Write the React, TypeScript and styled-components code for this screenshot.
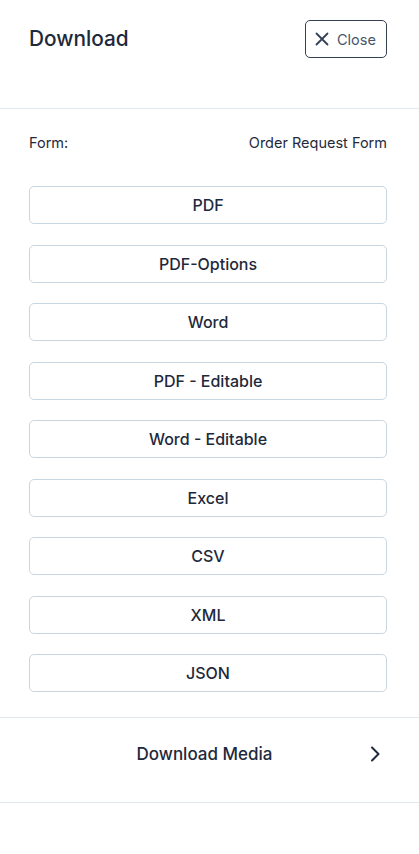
import React from "react";
import styled, { createGlobalStyle } from "styled-components";

const Global = createGlobalStyle`
  html, body { margin: 0; padding: 0; background: #ffffff; }
  body { font-family: Inter, "Open Sans", "Liberation Sans", sans-serif; color: #1e293b; }
  * { box-sizing: border-box; }
`;

const Panel = styled.div`
  width: 419px;
  min-height: 854px;
  background: #fff;
  display: flex;
  flex-direction: column;
`;

const Header = styled.header`
  display: flex;
  justify-content: space-between;
  align-items: flex-start;
  padding: 20px 32px 0 29px;
  height: 109px;
  border-bottom: 1px solid #e2e8f0;
`;

const Title = styled.h1`
  margin: 0;
  margin-top: 7px;
  font-size: 20.8px;
  line-height: 24px;
  font-weight: 500;
  color: #1e293b;
`;

const CloseButton = styled.button`
  display: flex;
  align-items: center;
  gap: 7px;
  height: 38px;
  width: 82px;
  padding: 0 0 0 8px;
  background: #fff;
  border: 1px solid #334155;
  border-radius: 5px;
  font-family: inherit;
  font-size: 14.5px;
  color: #475569;
  cursor: pointer;
`;

const Body = styled.div`
  display: flex;
  flex-direction: column;
  padding: 25px 32px 25px 29px;
  border-bottom: 1px solid #e2e8f0;
`;

const FormRow = styled.div`
  display: flex;
  justify-content: space-between;
  font-size: 14.5px;
  line-height: 18px;
  color: #1e293b;
  margin-bottom: 34px;
`;

const ButtonList = styled.div`
  display: flex;
  flex-direction: column;
  gap: 20.5px;
`;

const FormatButton = styled.button`
  height: 38px;
  width: 100%;
  background: #fff;
  border: 1px solid #c8d6e1;
  border-radius: 5px;
  font-family: inherit;
  font-size: 16px;
  font-weight: 500;
  color: #1e293b;
  cursor: pointer;
`;

const MediaRow = styled.div`
  height: 85px;
  display: flex;
  align-items: center;
  justify-content: center;
  position: relative;
  padding: 0 10px 12px 0;
  border-bottom: 1px solid #e2e8f0;
  font-size: 17px;
  font-weight: 500;
  color: #1e293b;
`;

const Chevron = styled.span`
  position: absolute;
  right: 39px;
  top: 28px;
  display: flex;
`;

const formats = [
  "PDF",
  "PDF-Options",
  "Word",
  "PDF - Editable",
  "Word - Editable",
  "Excel",
  "CSV",
  "XML",
  "JSON",
];

export default function App() {
  return (
    <Panel>
      <Global />
      <Header>
        <Title>Download</Title>
        <CloseButton>
          <svg width="16" height="16" viewBox="0 0 16 16" fill="none">
            <path d="M2.5 2.5L13.5 13.5M13.5 2.5L2.5 13.5" stroke="#334155" strokeWidth="1.8" strokeLinecap="round" />
          </svg>
          Close
        </CloseButton>
      </Header>
      <Body>
        <FormRow>
          <span>Form:</span>
          <span>Order Request Form</span>
        </FormRow>
        <ButtonList>
          {formats.map((f) => (
            <FormatButton key={f}>{f}</FormatButton>
          ))}
        </ButtonList>
      </Body>
      <MediaRow>
        Download Media
        <Chevron>
          <svg width="10" height="16" viewBox="0 0 10 16" fill="none">
            <path d="M2 1.5L8.5 8L2 14.5" stroke="#1e293b" strokeWidth="2" strokeLinecap="round" strokeLinejoin="round" />
          </svg>
        </Chevron>
      </MediaRow>
    </Panel>
  );
}
